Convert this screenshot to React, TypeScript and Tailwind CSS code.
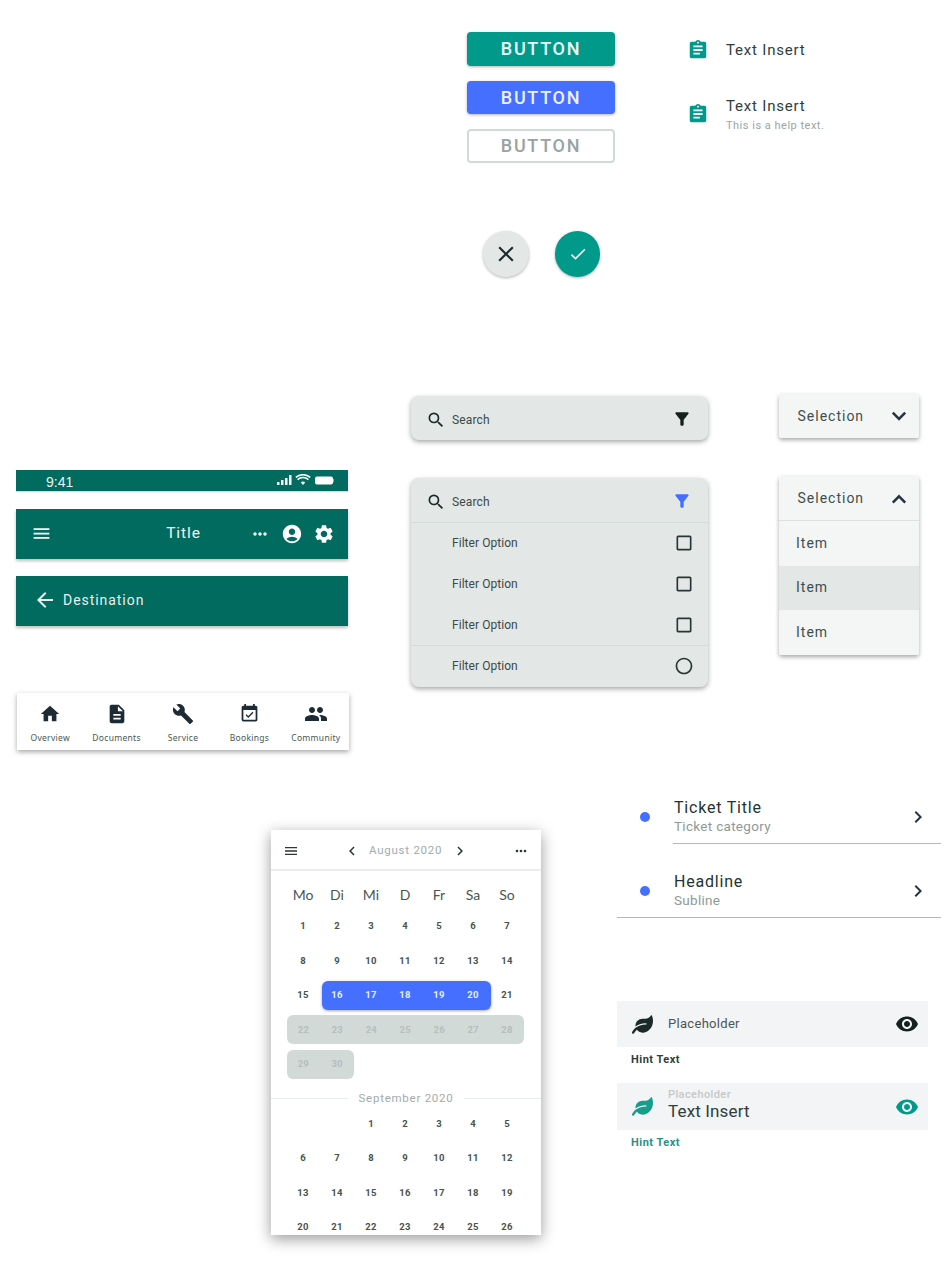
import React from "react";
import {
  MdAssignment, MdClose, MdCheck, MdMenu, MdMoreHoriz, MdAccountCircle, MdSettings, MdArrowBack,
  MdHome, MdDescription, MdBuild, MdEventAvailable, MdPeople, MdSearch, MdFilterAlt,
  MdCheckBoxOutlineBlank, MdRadioButtonUnchecked, MdChevronLeft,
  MdChevronRight, MdVisibility,
} from "react-icons/md";
import { FaLeaf } from "react-icons/fa";

const font = "font-['Roboto',sans-serif]";

function Btn({ cls, children }: { cls: string; children: string }) {
  return (
    <div className={`w-[148px] h-[33.5px] rounded-[4px] flex items-center justify-center text-[18px] tracking-[1.7px] font-medium ${cls}`}>
      {children}
    </div>
  );
}

function StatusBar() {
  return (
    <div className="h-[20.5px] bg-[#016b5f] flex items-center justify-between pl-[30px] pr-[14px] text-white shadow-[0_1px_1px_rgba(0,0,0,0.15)]">
      <span className="font-['Liberation_Sans',sans-serif] text-[14px] leading-none mt-[4px] text-[#e8f2f0]">9:41</span>
      <svg width="57" height="12" viewBox="0 0 57 12" fill="white">
        <rect x="0" y="8" width="2.5" height="3" rx="0.5" />
        <rect x="4" y="6" width="2.5" height="5" rx="0.5" />
        <rect x="8" y="4" width="2.5" height="7" rx="0.5" />
        <rect x="12" y="1" width="2.5" height="10" rx="0.5" />
        <path d="M26 11 l-2.2-2.6 a3.4 3.4 0 0 1 4.4 0z" />
        <path d="M20.6 5.6 a8 8 0 0 1 10.8 0" fill="none" stroke="white" strokeWidth="1.5" />
        <path d="M18.8 3.4 a11 11 0 0 1 14.4 0" fill="none" stroke="white" strokeWidth="1.5" />
        <rect x="38" y="2.5" width="18" height="8" rx="2" />
        <rect x="56" y="5" width="1" height="3" fill="#7fb5af" />
      </svg>
    </div>
  );
}

function TitleBar() {
  return (
    <div className="h-[50px] mt-[18px] bg-[#016b5f] flex items-center pl-[15px] pr-[13px] text-white shadow-[0_2px_3px_rgba(0,0,0,0.25)]">
      <MdMenu size={21} className="-mt-[1px] -ml-[0.5px]" />
      <span className="ml-[102px] w-[60px] text-center text-[15.5px] tracking-[0.9px] font-normal text-[#f0f6f5]">Title</span>
      <div className="ml-auto flex items-center">
        <MdMoreHoriz size={20} className="mr-[11px]" />
        <MdAccountCircle size={22} className="mr-[10px]" />
        <MdSettings size={22} />
      </div>
    </div>
  );
}

function DestinationBar() {
  return (
    <div className="h-[50px] mt-[17px] bg-[#016b5f] flex items-center pl-[17px] text-[#e6f0ee] shadow-[0_2px_3px_rgba(0,0,0,0.25)]">
      <MdArrowBack size={24} className="-mt-[1px]" />
      <span className="ml-[6px] -mt-[1px] text-[14px] tracking-[0.95px]">Destination</span>
    </div>
  );
}

function NavItem({ icon, label }: { icon: React.ReactNode; label: string }) {
  return (
    <div className="flex-1 flex flex-col items-center">
      <div className="h-[24px] flex items-center text-[#1d2b36]">{icon}</div>
      <span className="mt-[6px] text-[8.5px] leading-[12px] tracking-[0.3px] text-[#4a5654] font-['Noto_Sans',sans-serif]">{label}</span>
    </div>
  );
}

function BottomNav() {
  return (
    <div className="w-[332px] ml-[1px] h-[57px] mt-[67px] pt-[9px] bg-white flex shadow-[0_2px_5px_rgba(0,0,0,0.35)]">
      <NavItem icon={<MdHome size={22} />} label="Overview" />
      <NavItem icon={<MdDescription size={22} />} label="Documents" />
      <NavItem icon={<MdBuild size={22} />} label="Service" />
      <NavItem icon={<MdEventAvailable size={21} />} label="Bookings" />
      <NavItem icon={<MdPeople size={24} />} label="Community" />
    </div>
  );
}

function SearchRow({ filterCls }: { filterCls: string }) {
  return (
    <div className="h-[44px] flex items-center pl-[15px] pr-[16px] pt-[3px]">
      <MdSearch size={20} className="text-[#1b2a29] mr-[6px]" />
      <span className="text-[12px] text-[#3b4a48] tracking-[0.15px]">Search</span>
      <MdFilterAlt size={20} className={`ml-auto -mt-[1px] ${filterCls}`} />
    </div>
  );
}

function FilterRow({ icon, h = "h-[40.7px]" }: { icon: React.ReactNode; h?: string }) {
  return (
    <div className={`${h} flex items-center pl-[41px] pr-[14px]`}>
      <span className="text-[12px] text-[#3b4a48] tracking-[0.05px]">Filter Option</span>
      <span className="ml-auto text-[#273634]">{icon}</span>
    </div>
  );
}

function Chevron({ up }: { up?: boolean }) {
  return (
    <svg width="16" height="10" viewBox="0 0 16 10" className="ml-auto" fill="none" stroke="#273444" strokeWidth="2.6">
      <path d={up ? "M1.8 8.6 L8 2.4 L14.2 8.6" : "M1.8 1.6 L8 7.8 L14.2 1.6"} />
    </svg>
  );
}

function SelectHead({ open }: { open: boolean }) {
  return (
    <div className={`flex items-center pl-[18.5px] pr-[12px] bg-[#f4f6f6] ${open ? "h-[45px] pt-[1px] border-b border-[#dbe2e0]" : "h-[44px]"}`}>
      <span className="text-[14px] tracking-[1px] text-[#3f4e4c]">Selection</span>
      <Chevron up={open} />
    </div>
  );
}

function SelectItem({ active }: { active?: boolean }) {
  return (
    <div className={`h-[44.5px] flex items-center pl-[17px] text-[14px] tracking-[1px] text-[#3f4e4c] ${active ? "bg-[#e3e7e5]" : "bg-[#f4f6f6]"}`}>
      Item
    </div>
  );
}

const Grid = ({ children, cls = "" }: { children: React.ReactNode; cls?: string }) => (
  <div className={`grid grid-cols-[repeat(7,34px)] ml-[15px] ${cls}`}>{children}</div>
);

const dayCls = "text-[9.5px] font-bold tracking-[0.2px]";

function Day({ n }: { n: number | string }) {
  return <div className={`h-[34.5px] flex items-center justify-center ${dayCls} text-[#46544f]`}>{n}</div>;
}

function Pill({ days, cls, span }: { days: number[]; cls: string; span: string }) {
  return (
    <div className={`${span} h-[29px] my-[2.75px] rounded-[6px] flex ${cls}`}>
      {days.map((n) => (
        <div key={n} className={`w-[34px] flex items-center justify-center ${dayCls}`}>{n}</div>
      ))}
    </div>
  );
}

function Calendar() {
  const heads = ["Mo", "Di", "Mi", "D", "Fr", "Sa", "So"];
  const septDays = Array.from({ length: 26 }, (_, i) => i + 1);
  return (
    <div className="w-[270px] h-[405px] ml-[271px] bg-white overflow-hidden shadow-[0_4px_14px_rgba(0,0,0,0.4)]">
      <div className="h-[41px] pt-[2px] border-b-2 border-[#eceeee] flex items-center pl-[12px] pr-[12px] text-[#2a3836]">
        <MdMenu size={16} />
        <MdChevronLeft size={18} className="ml-[44px]" />
        <span className="ml-[8px] text-[11.5px] tracking-[0.75px] text-[#a3abaa]">August 2020</span>
        <MdChevronRight size={18} className="ml-[9px]" />
        <MdMoreHoriz size={16} className="ml-auto" />
      </div>
      <Grid cls="mt-[15px] h-[18px]">
        {heads.map((h) => (
          <div key={h} className="text-center font-['Lato',sans-serif] text-[14px] leading-[18px] text-[#4a5654]">{h}</div>
        ))}
      </Grid>
      <Grid cls="mt-[5px]">
        {[1, 2, 3, 4, 5, 6, 7, 8, 9, 10, 11, 12, 13, 14, 15].map((n) => <Day key={n} n={n} />)}
        <Pill span="col-span-5 ml-[2px] -mr-[0.5px] [&>div:first-child]:-ml-[2px]" days={[16, 17, 18, 19, 20]} cls="bg-[#4570ff] text-[#e8edff] shadow-[0_1px_3px_rgba(0,0,0,0.35)]" />
        <Day n={21} />
        <Pill span="col-span-7 ml-[0.5px]" days={[22, 23, 24, 25, 26, 27, 28]} cls="bg-[#d2dad8] text-[#b4bebc]" />
        <Pill span="col-span-2 ml-[0.5px]" days={[29, 30]} cls="bg-[#d2dad8] text-[#b4bebc]" />
      </Grid>
      <div className="flex items-center mt-[8px] h-[18px]">
        <div className="flex-1 h-[1px] bg-[#e6ecea]" />
        <span className="w-[116px] text-center text-[11.5px] tracking-[0.75px] text-[#a3abaa]">September 2020</span>
        <div className="flex-1 h-[1px] bg-[#e6ecea]" />
      </div>
      <Grid cls="-mt-[1px]">
        <Day n="" />
        <Day n="" />
        {septDays.map((n) => <Day key={n} n={n} />)}
      </Grid>
    </div>
  );
}

function ListRow({ title, sub, inset }: { title: string; sub: string; inset?: boolean }) {
  return (
    <div className="relative h-[51px] pb-[3px] flex items-center">
      <div className="ml-[23px] w-[10px] h-[10px] rounded-full bg-[#4570ff]" />
      <div className="ml-[24px] flex flex-col">
        <span className="text-[16px] leading-[18px] tracking-[0.8px] text-[#243331]">{title}</span>
        <span className="text-[13.5px] leading-[18px] tracking-[0.3px] text-[#8f9998]">{sub}</span>
      </div>
      <MdChevronRight size={24} className="ml-auto mr-[11px] text-[#273444]" />
      <div className={`absolute bottom-0 right-0 h-[1px] bg-[#b4b8b8] ${inset ? "left-[56px]" : "left-0"}`} />
    </div>
  );
}

export default function App() {
  return (
    <div className={`${font} bg-white w-[950px] h-[1261px] overflow-hidden`}>
      <div className="h-[393px] flex items-start pt-[32px] pl-[467px]">
        <div>
          <div className="flex flex-col gap-[15px]">
            <Btn cls="bg-[#00998a] text-[#eefaf8] shadow-[0_1px_3px_rgba(0,0,0,0.3)]">BUTTON</Btn>
            <Btn cls="bg-[#4570ff] text-[#eef2ff] shadow-[0_1px_3px_rgba(0,0,0,0.3)]">BUTTON</Btn>
            <Btn cls="border-2 border-[#d2dad8] text-[#98a3a1]">BUTTON</Btn>
          </div>
          <div className="flex mt-[68px] ml-[16px] gap-[26px]">
            <div className="w-[46px] h-[46px] rounded-full bg-[#e3e7e5] flex items-center justify-center text-[#1c2b2a] shadow-[0_1px_3px_rgba(0,0,0,0.3)]">
              <MdClose size={26} />
            </div>
            <div className="w-[45px] h-[46px] rounded-full bg-[#00998a] flex items-center justify-center text-[#eefaf8] shadow-[0_1px_3px_rgba(0,0,0,0.3)]">
              <MdCheck size={20} />
            </div>
          </div>
        </div>
        <div className="ml-[72px] mt-[7px]">
          <div className="flex items-center h-[22px]">
            <MdAssignment size={22} className="text-[#00998a]" />
            <span className="ml-[17px] text-[15px] tracking-[0.8px] text-[#2f3e3c]">Text Insert</span>
          </div>
          <div className="flex items-center mt-[34px]">
            <MdAssignment size={22} className="text-[#00998a] -mt-[1px]" />
            <div className="ml-[17px] flex flex-col">
              <span className="text-[15px] leading-[22px] tracking-[0.8px] text-[#2f3e3c]">Text Insert</span>
              <span className="text-[11px] leading-[17px] tracking-[0.5px] text-[#9aa5a3]">This is a help text.</span>
            </div>
          </div>
        </div>
      </div>

      <div className="h-[407px] flex items-start">
        <div className="w-[332px] ml-[16px] mt-[77px]">
          <StatusBar />
          <TitleBar />
          <DestinationBar />
          <BottomNav />
        </div>
        <div className="w-[297px] ml-[63px] mt-[3px]">
          <div className="rounded-[8px] bg-[#e3e7e5] shadow-[0_2px_5px_rgba(0,0,0,0.35)]">
            <SearchRow filterCls="text-[#14211f]" />
          </div>
          <div className="mt-[38px] rounded-[8px] bg-[#e3e7e5] shadow-[0_2px_5px_rgba(0,0,0,0.35)]">
            <div className="border-b border-[#d2dad8]"><SearchRow filterCls="text-[#4570ff]" /></div>
            <FilterRow icon={<MdCheckBoxOutlineBlank size={20} />} />
            <FilterRow icon={<MdCheckBoxOutlineBlank size={20} />} />
            <FilterRow icon={<MdCheckBoxOutlineBlank size={20} />} />
            <div className="border-t border-[#d2dad8]">
              <FilterRow h="h-[40.5px]" icon={<MdRadioButtonUnchecked size={20} />} />
            </div>
          </div>
        </div>
        <div className="w-[140px] ml-[71px] mt-[1px]">
          <div className="rounded-[3px] overflow-hidden shadow-[0_2px_4px_rgba(0,0,0,0.35)]">
            <SelectHead open={false} />
          </div>
          <div className="mt-[38px] rounded-[3px] overflow-hidden shadow-[0_2px_4px_rgba(0,0,0,0.35)]">
            <SelectHead open />
            <SelectItem />
            <SelectItem active />
            <SelectItem />
          </div>
        </div>
      </div>

      <div className="flex items-start pt-[30px]">
        <Calendar />
        <div className="ml-[76px] w-[324px] -mt-[37px]">
          <ListRow title="Ticket Title" sub="Ticket category" inset />
          <div className="mt-[23px]"><ListRow title="Headline" sub="Subline" /></div>
          <div className="mt-[83px] w-[311px] h-[46px] bg-[#f3f4f6] flex items-center pl-[15px] pr-[9px]">
            <FaLeaf size={21} className="text-[#1b2a29]" />
            <span className="ml-[15px] text-[13px] tracking-[0.3px] text-[#4a5654]">Placeholder</span>
            <MdVisibility size={24} className="ml-auto text-[#14211f]" />
          </div>
          <div className="ml-[14px] mt-[6px] text-[11px] font-bold leading-[14px] tracking-[0.5px] text-[#2f3e3c]">Hint Text</div>
          <div className="mt-[16px] w-[311px] h-[47px] bg-[#f3f4f6] flex items-center pl-[15px] pr-[9px]">
            <FaLeaf size={21} className="text-[#169d8c]" />
            <div className="ml-[15px] flex flex-col -mt-[2px]">
              <span className="text-[11px] font-medium leading-[12px] tracking-[0.4px] text-[#c3c9c8]">Placeholder</span>
              <span className="text-[17px] leading-[21px] tracking-[0.15px] text-[#2f3e3c]">Text Insert</span>
            </div>
            <MdVisibility size={24} className="ml-auto text-[#00998a]" />
          </div>
          <div className="ml-[14px] mt-[6px] text-[11px] font-bold leading-[14px] tracking-[0.5px] text-[#2b8f84]">Hint Text</div>
        </div>
      </div>
    </div>
  );
}
